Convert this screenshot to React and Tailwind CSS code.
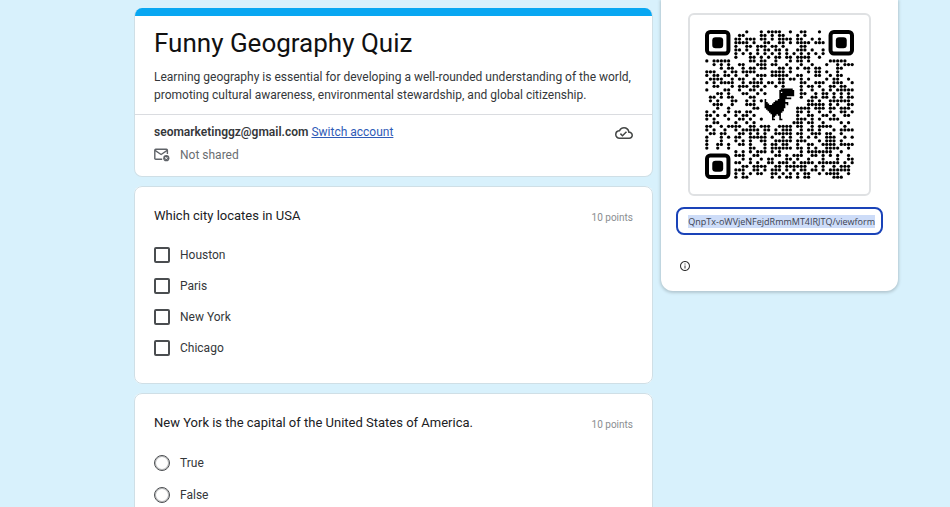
import React, { useEffect, useRef } from "react";

// Each row is one line of QR modules, the three corner finders are drawn apart
const qrRows = [
  "...........#...#.####..#..##...#.........",
  ".........##....##.#.##...#.#.............",
  "........##.###.##.#.####.##..#.#.........",
  "........####.#..##..##.#.####.###........",
  "........#..##.###.##.#....##.............",
  "........##.#..#.##.##.#..###.#..#........",
  "........#.#.#.#.#.#.#.#.#.#.#.#.#........",
  "........#...##.#.#.##.##.####..#.........",
  "#.#####.....##.##..#...#.##.#.....#####..",
  "..#.#.#..##...###.##..#...#..#...#..#.###",
  "....#.##..#.##.##...##.#.#.##.##....##...",
  "###..#.##.####....####.#....#.##.#..#....",
  "#.##.##.#..#..###.#####..##...##..#.##...",
  ".####..#.##..#.#....##.##.#.#....#.##..#.",
  "#.#.####..#.####.##.##....##..###..###..#",
  "..##...#.###.##.#..#.#....#.##.#..##.##..",
  "#....##..#..##.#..........#..#..#.#.#####",
  "...##.#...##..#.#.........##..#.##.#.#.#.",
  ".##.#.##....##............#..##.##.#.#.##",
  ".#.#...##..#.#.#............##.#..######.",
  "..###..#...###..............#####.#.#..##",
  "...#..#......##..........####.###.##.###.",
  "#.#...#.##.##............##.#..#..#..##.#",
  "##.#.#..#.##.#...........#..##..##.#..##.",
  "#.#...#..##.#..#.........###.#.#..###....",
  "..##....#..#.#..........###.##..#....#.#.",
  "##..#.####..##.###..####.##..#.####...#..",
  "#.#..#..#.#####.##.#.###..#.##.#...#.####",
  ".##.##...##.#.#.#..#####.##..###.##..#...",
  "#...#.#.##..#####.#..#.#..#.#.#..###..#.#",
  "#...#...#.#.#..##..#####.###...#.###.#...",
  "#..##.#..##.#...#.##.##..#..##..####.####",
  "#..#..#.....##..#.######.##.#.#..####..#.",
  "........#.#.#.###.#.#.....#.#######..#...",
  "........###..##....##.#.###..##.#.#.#..#.",
  "..........#.#..#.##...##.#..#...#...#..##",
  "........##..#.#..##.###.#.####.######.#.#",
  "..........##.####..##.######..#.#..#.###.",
  "........###..##.#.###.#.#.##.##.#.######.",
  "........#.#.#.##..##.#.#.#.##..#.####..#.",
  "........#.##......#.#.##.#.##......###...",
];

const dinoRows = [
  "...........########.",
  "..........##########",
  "..........#.########",
  "..........##########",
  "..........##########",
  "..........#####.....",
  "..........########..",
  "#........#####......",
  "#......#######......",
  "##....##########....",
  "###..#########.#....",
  "##############......",
  "##############......",
  ".############.......",
  "..###########.......",
  "...#########........",
  "....#######.........",
  ".....###.##.........",
  ".....##...#.........",
  ".....#....#.........",
  ".....##...##........",
];

// One square per "#", joined in a single path so that no seams show
const dinoPath = dinoRows
  .map((row, y) =>
    row
      .split("")
      .map((cell, x) => (cell === "#" ? `M${x} ${y}h1.1v1.1h-1.1z` : ""))
      .join("")
  )
  .join("");

const finders = [
  [0, 0],
  [34, 0],
  [0, 34],
];

function QrCode() {
  return (
    <svg viewBox="0 0 41 41" className="w-full" role="img" aria-label="QR code">
      {qrRows.map((row, y) =>
        row
          .split("")
          .map((cell, x) =>
            cell === "#" ? (
              <circle key={`${x}-${y}`} cx={x + 0.5} cy={y + 0.5} r="0.45" />
            ) : null
          )
      )}
      {finders.map(([x, y]) => (
        <g key={`${x}-${y}`} transform={`translate(${x} ${y})`}>
          <rect x="0.55" y="0.55" width="5.9" height="5.9" rx="0.9" fill="#fff" stroke="#000" strokeWidth="1.1" />
          <rect x="2" y="2" width="3" height="3" rx="0.9" />
        </g>
      ))}
      <path d={dinoPath} transform="translate(16.4 16.1) scale(0.405 0.415)" />
    </svg>
  );
}

function CloudDoneIcon() {
  return (
    <svg viewBox="0 0 24 24" className="h-[18px] w-[18px]" fill="#444746">
      <path d="M19.35 10.04A7.49 7.49 0 0 0 12 4C9.11 4 6.6 5.64 5.35 8.04A5.994 5.994 0 0 0 0 14c0 3.31 2.69 6 6 6h13c2.76 0 5-2.24 5-5 0-2.64-2.05-4.78-4.65-4.96zM19 18H6c-2.21 0-4-1.79-4-4 0-2.05 1.53-3.76 3.56-3.97l1.07-.11.5-.95A5.469 5.469 0 0 1 12 6c2.62 0 4.88 1.86 5.39 4.43l.3 1.5 1.53.11A2.98 2.98 0 0 1 22 15c0 1.65-1.35 3-3 3zm-9-3.82-2.09-2.09L6.5 13.5 10 17l6.01-6.01-1.41-1.41z" />
    </svg>
  );
}

function MailOffIcon() {
  return (
    <svg viewBox="0 0 16 14" className="h-[14px] w-[16px]" fill="none" stroke="#5f6368" strokeWidth="1.4">
      <path d="M8.2 11.3H1.7a.9.9 0 0 1-.9-.9V2.2a.9.9 0 0 1 .9-.9h10.8a.9.9 0 0 1 .9.9V6" />
      <path d="M1 2.4l6.1 4.1 6.1-4.1" />
      <circle cx="12.3" cy="10.2" r="3.1" fill="#5f6368" stroke="none" />
      <path d="M11.2 9.1l2.2 2.2m0-2.2l-2.2 2.2" stroke="#fff" strokeWidth=".9" />
    </svg>
  );
}

function InfoIcon() {
  return (
    <svg viewBox="0 0 24 24" className="h-3 w-3" fill="#333">
      <path d="M11 7h2v2h-2zm0 4h2v6h-2zm1-9C6.48 2 2 6.48 2 12s4.48 10 10 10 10-4.48 10-10S17.52 2 12 2zm0 18c-4.41 0-8-3.59-8-8s3.59-8 8-8 8 3.59 8 8-3.59 8-8 8z" />
    </svg>
  );
}

function Question({ title, type, name, options, listClass }) {
  const boxClass =
    type === "radio"
      ? "h-4 w-4 appearance-none rounded-full border border-[#4a4d50] bg-white ring-1 ring-[#4a4d50]/40 ring-inset checked:border-[5px]"
      : "h-4 w-4 appearance-none rounded-xs border-2 border-[#4a4d50] bg-white checked:bg-[#4a4d50]";

  return (
    <fieldset className="rounded-lg border border-[#cfdfe6] bg-white px-[19px] pt-[19px] pb-[27px]">
      <div className="flex items-center justify-between">
        <h2 className="text-[13px] leading-[20px] text-[#202124]">{title}</h2>
        <span className="pt-[2px] text-[10px] text-[#8a8d91]">10 points</span>
      </div>
      <div className={listClass}>
        {options.map((option) => (
          <label key={option} className="flex items-center gap-[10px] text-[12px] leading-[16px]">
            <input type={type} name={name} className={boxClass} />
            {option}
          </label>
        ))}
      </div>
    </fieldset>
  );
}

function ShareCard() {
  const linkRef = useRef(null);

  // Keep the end of the link in view, ready to copy
  useEffect(() => {
    linkRef.current.focus();
    linkRef.current.select();
    linkRef.current.scrollLeft = linkRef.current.scrollWidth;
  }, []);

  return (
    <aside className="w-[237px] shrink-0 self-start rounded-b-xl bg-white px-[15px] pt-[13px] pb-[19px] shadow-[0_1px_3px_1px_#b3c8d1]">
      <div className="mx-3 rounded-md border-2 border-[#dfe1e3] p-[15px]">
        <QrCode />
      </div>
      <input
        ref={linkRef}
        readOnly
        aria-label="Form link"
        value="QnpTx-oWVjeNFejdRmmMT4IRJTQ/viewform"
        className="mt-[11px] h-7 w-full rounded-lg border-2 border-[#1a43b8] px-[6px] text-right font-['Open_Sans',sans-serif] text-[9px] text-[#3c4250] outline-none selection:bg-[#cddcf8] selection:text-[#3c4250]"
      />
      <button aria-label="About this link" className="mt-[25px] ml-[3px] block">
        <InfoIcon />
      </button>
    </aside>
  );
}

function App() {
  return (
    <div className="flex h-screen gap-2 overflow-hidden bg-[#d8f1fc] pr-[52px] pl-[134px] font-[Roboto,sans-serif] text-[#34373a]">
      <main className="flex min-w-0 flex-1 flex-col gap-[9px] pt-2">
        <header className="shrink-0 overflow-hidden rounded-lg border border-t-0 border-[#cfdfe6] bg-white">
          <div className="h-2 bg-[#08a7f2]" />
          <div className="px-[19px] pt-[10px] pb-[10px]">
            <h1 className="text-[26px] leading-[34px] text-[#111]">Funny Geography Quiz</h1>
            <p className="mt-2 text-[12px] leading-[18px]">
              Learning geography is essential for developing a well-rounded understanding of the world,
              promoting cultural awareness, environmental stewardship, and global citizenship.
            </p>
          </div>
          <div className="flex items-start justify-between border-t border-[#dadce0] px-[19px] pt-[9px] pb-[13px]">
            <div>
              <p className="text-[12px] leading-[16px]">
                <span className="font-semibold">seomarketinggz@gmail.com</span>{" "}
                <a href="#" className="text-[#2f5bb7] underline">
                  Switch account
                </a>
              </p>
              <p className="mt-[7px] flex items-center gap-[10px] text-[12px] leading-[16px] text-[#6a6d71]">
                <MailOffIcon />
                Not shared
              </p>
            </div>
            <CloudDoneIcon />
          </div>
        </header>

        <Question
          title="Which city locates in USA"
          type="checkbox"
          name="city"
          options={["Houston", "Paris", "New York", "Chicago"]}
          listClass="mt-[21px] flex flex-col gap-[15px]"
        />
        <Question
          title="New York is the capital of the United States of America."
          type="radio"
          name="capital"
          options={["True", "False"]}
          listClass="mt-[22px] flex flex-col gap-4"
        />
      </main>
      <ShareCard />
    </div>
  );
}

export default App;
